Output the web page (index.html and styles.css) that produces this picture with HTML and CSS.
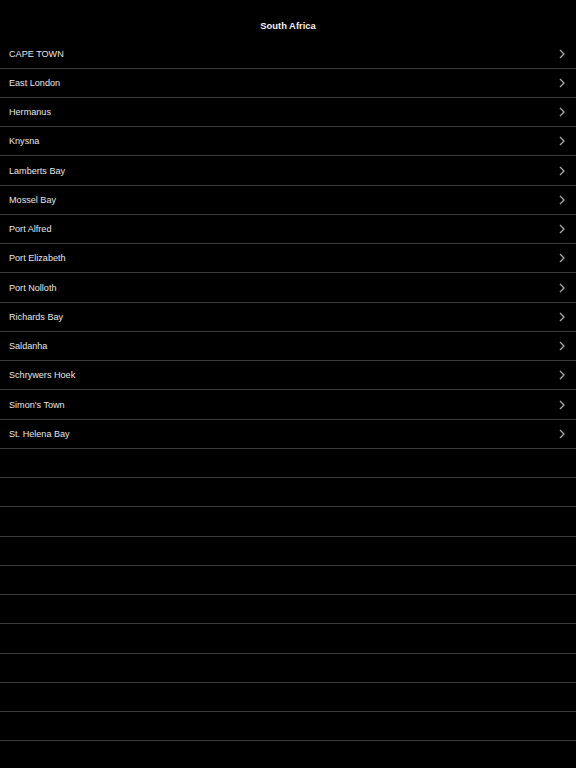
FILE: index.html
```html
<!DOCTYPE html>
<html lang="en">
<head>
  <meta charset="UTF-8">
  <meta name="viewport" content="width=device-width, initial-scale=1.0">
  <title>South Africa</title>
  <link rel="stylesheet" href="styles.css">
</head>
<body>
<div class="nav-bar">
  <div class="nav-title">South Africa</div>
</div>
<ul class="table">
  <li class="cell"><span>CAPE TOWN</span><svg class="chev" viewBox="0 0 6 10"><polyline points="1,1 5,5 1,9"/></svg></li>
  <li class="cell"><span>East London</span><svg class="chev" viewBox="0 0 6 10"><polyline points="1,1 5,5 1,9"/></svg></li>
  <li class="cell"><span>Hermanus</span><svg class="chev" viewBox="0 0 6 10"><polyline points="1,1 5,5 1,9"/></svg></li>
  <li class="cell"><span>Knysna</span><svg class="chev" viewBox="0 0 6 10"><polyline points="1,1 5,5 1,9"/></svg></li>
  <li class="cell"><span>Lamberts Bay</span><svg class="chev" viewBox="0 0 6 10"><polyline points="1,1 5,5 1,9"/></svg></li>
  <li class="cell"><span>Mossel Bay</span><svg class="chev" viewBox="0 0 6 10"><polyline points="1,1 5,5 1,9"/></svg></li>
  <li class="cell"><span>Port Alfred</span><svg class="chev" viewBox="0 0 6 10"><polyline points="1,1 5,5 1,9"/></svg></li>
  <li class="cell"><span>Port Elizabeth</span><svg class="chev" viewBox="0 0 6 10"><polyline points="1,1 5,5 1,9"/></svg></li>
  <li class="cell"><span>Port Nolloth</span><svg class="chev" viewBox="0 0 6 10"><polyline points="1,1 5,5 1,9"/></svg></li>
  <li class="cell"><span>Richards Bay</span><svg class="chev" viewBox="0 0 6 10"><polyline points="1,1 5,5 1,9"/></svg></li>
  <li class="cell"><span>Saldanha</span><svg class="chev" viewBox="0 0 6 10"><polyline points="1,1 5,5 1,9"/></svg></li>
  <li class="cell"><span>Schrywers Hoek</span><svg class="chev" viewBox="0 0 6 10"><polyline points="1,1 5,5 1,9"/></svg></li>
  <li class="cell"><span>Simon's Town</span><svg class="chev" viewBox="0 0 6 10"><polyline points="1,1 5,5 1,9"/></svg></li>
  <li class="cell"><span>St. Helena Bay</span><svg class="chev" viewBox="0 0 6 10"><polyline points="1,1 5,5 1,9"/></svg></li>
  <!-- empty rows -->
  <li class="cell empty"></li>
  <li class="cell empty"></li>
  <li class="cell empty"></li>
  <li class="cell empty"></li>
  <li class="cell empty"></li>
  <li class="cell empty"></li>
  <li class="cell empty"></li>
  <li class="cell empty"></li>
  <li class="cell empty"></li>
  <li class="cell empty"></li>
</ul>
</body>
</html>
```

FILE: styles.css
```css
html, body {
  margin: 0;
  background: #000;
}

body {
  font-family: "Liberation Sans", Arial, sans-serif;
  color: #e6e6e6;
}

/* top bar */
.nav-bar {
  height: 39.375px;
  padding-top: 11.25px;
  box-sizing: border-box;
  display: flex;
  justify-content: center;
  align-items: center;
}

.nav-title {
  font-size: 9.4px;
  font-weight: bold;
  color: #f2f2f2;
}

/* rows */
.table {
  list-style: none;
  margin: 0;
  padding: 0;
}

.cell {
  height: 29.25px;
  box-sizing: border-box;
  border-bottom: 1px solid #3c3c3c;
  display: flex;
  align-items: center;
  justify-content: space-between;
  padding: 0 11px 0 9px;
  font-size: 9.1px;
}

.chev {
  width: 6px;
  height: 10px;
  fill: none;
  stroke: #a8a8a8;
  stroke-width: 1.3;
}
```
